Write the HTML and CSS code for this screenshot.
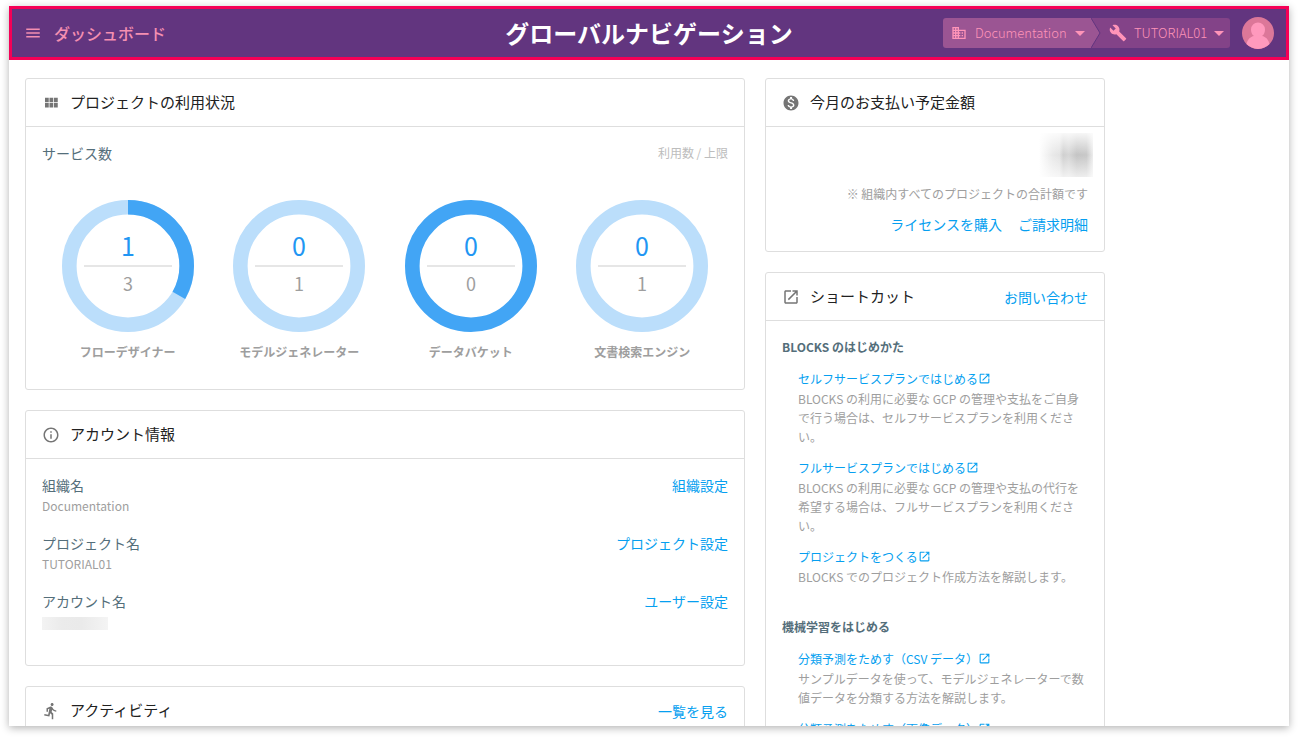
FILE: index.html
```html
<!DOCTYPE html>
<html lang="ja">
<head>
<meta charset="utf-8">
<meta name="viewport" content="width=device-width, initial-scale=1">
<title>ダッシュボード</title>
<link rel="stylesheet" href="styles.css">
</head>
<body>
<svg class="sprite" aria-hidden="true">
  <symbol id="menu" viewBox="0 0 24 24"><path d="M3 18h18v-2H3v2zm0-5h18v-2H3v2zm0-7v2h18V6H3z"/></symbol>
  <symbol id="business" viewBox="0 0 24 24"><path d="M12 7V3H2v18h20V7H12zM6 19H4v-2h2v2zm0-4H4v-2h2v2zm0-4H4V9h2v2zm0-4H4V5h2v2zm4 12H8v-2h2v2zm0-4H8v-2h2v2zm0-4H8V9h2v2zm0-4H8V5h2v2zm10 12h-8v-2h2v-2h-2v-2h2v-2h-2V9h8v10zm-2-8h-2v2h2v-2zm0 4h-2v2h2v-2z"/></symbol>
  <symbol id="build" viewBox="0 0 24 24"><path d="M22.7 19l-9.100-9.100c.9-2.300.4-5-1.500-6.900-2-2-5-2.400-7.400-1.300L9 6 6 9 1.600 4.700C.4 7.100.9 10.100 2.900 12.100c1.900 1.900 4.600 2.400 6.900 1.500l9.100 9.100c.4.4 1 .4 1.400 0l2.300-2.300c.5-.4.5-1.100.1-1.400z"/></symbol>
  <symbol id="caret" viewBox="0 0 10 5"><path d="M0 0l5 5 5-5z"/></symbol>
  <symbol id="module" viewBox="0 0 24 24"><path d="M4 11h5V5H4v6zm0 7h5v-6H4v6zm6 0h5v-6h-5v6zm6 0h5v-6h-5v6zm-6-7h5V5h-5v6zm6-6v6h5V5h-5z"/></symbol>
  <symbol id="money" viewBox="0 0 24 24"><path d="M12 2C6.480 2 2 6.480 2 12s4.480 10 10 10 10-4.480 10-10S17.520 2 12 2zm1.410 16.090V20h-2.670v-1.930c-1.710-.36-3.160-1.460-3.270-3.400h1.960c.1 1.050.82 1.870 2.650 1.870 1.960 0 2.400-.98 2.400-1.590 0-.83-.44-1.610-2.670-2.140-2.480-.6-4.180-1.620-4.180-3.670 0-1.720 1.390-2.840 3.110-3.210V4h2.670v1.950c1.860.45 2.790 1.860 2.850 3.390H14.300c-.05-1.110-.64-1.870-2.220-1.870-1.500 0-2.400.68-2.400 1.640 0 .84.65 1.390 2.670 1.910s4.180 1.390 4.180 3.910c-.01 1.830-1.380 2.830-3.120 3.160z"/></symbol>
  <symbol id="open" viewBox="0 0 24 24"><path d="M19 19H5V5h7V3H5c-1.110 0-2 .9-2 2v14c0 1.100.89 2 2 2h14c1.100 0 2-.9 2-2v-7h-2v7zM14 3v2h3.590l-9.830 9.830 1.410 1.410L19 6.410V10h2V3h-7z"/></symbol>
  <symbol id="info" viewBox="0 0 24 24"><path d="M11 17h2v-6h-2v6zm1-15C6.480 2 2 6.480 2 12s4.480 10 10 10 10-4.480 10-10S17.520 2 12 2zm0 18c-4.410 0-8-3.590-8-8s3.590-8 8-8 8 3.590 8 8-3.590 8-8 8zM11 9h2V7h-2v2z"/></symbol>
  <symbol id="run" viewBox="0 0 24 24"><path d="M13.490 5.480c1.100 0 2-.9 2-2s-.9-2-2-2-2 .9-2 2 .9 2 2 2zm-3.600 13.900l1-4.400 2.100 2v6h2v-7.500l-2.100-2 .6-3c1.300 1.500 3.300 2.500 5.500 2.500v-2c-1.900 0-3.500-1-4.300-2.400l-1-1.600c-.4-.6-1-1-1.700-1-.3 0-.5.1-.8.1l-5.200 2.200v4.700h2v-3.400l1.800-.7-1.600 8.100-4.900-1-.4 2 7 1.400z"/></symbol>
</svg>

<div class="app">
  <header class="navbar">
    <div class="nav-start">
      <button class="menu-button" type="button" aria-label="メニュー"><svg class="icon"><use href="#menu"/></svg></button>
      <span class="page-name">ダッシュボード</span>
    </div>
    <h1 class="nav-title">グローバルナビゲーション</h1>
    <div class="nav-end">
      <div class="switcher">
        <button class="switch org" type="button"><svg class="icon icon-small"><use href="#business"/></svg><span>Documentation</span><svg class="caret"><use href="#caret"/></svg></button>
        <button class="switch project" type="button"><svg class="icon"><use href="#build"/></svg><span>TUTORIAL01</span><svg class="caret"><use href="#caret"/></svg></button>
        <svg class="divider" viewBox="0 0 10 30" aria-hidden="true"><path class="divider-fill" d="M0 0l9 15-9 15z"/><path class="divider-line" d="M0 0l9 15-9 15"/></svg>
      </div>
      <button class="avatar" type="button" aria-label="ユーザー"><svg viewBox="0 0 32 32"><circle class="avatar-back" cx="16" cy="16" r="16"/><path class="avatar-person" d="M16 5.500a7 7 0 0 1 7 7c0 3-1.200 5.300-3 6.500 3.800.7 6.500 3.500 7.500 8A16 16 0 0 1 4.500 27c1-4.500 3.700-7.300 7.500-8-1.800-1.200-3-3.500-3-6.500a7 7 0 0 1 7-7z"/></svg></button>
    </div>
  </header>

  <main class="content">
    <div class="column">
      <section class="card">
        <div class="card-head"><svg class="icon"><use href="#module"/></svg><h2>プロジェクトの利用状況</h2></div>
        <div class="card-body usage">
          <div class="row"><h3 class="label">サービス数</h3><span class="legend">利用数 / 上限</span></div>
          <ul class="meters">
            <li class="meter">
              <svg class="donut" viewBox="0 0 132 132"><circle class="track" cx="66" cy="66" r="58.700"/><circle class="value" cx="66" cy="66" r="58.700" pathLength="3" stroke-dasharray="1 2" transform="rotate(-90 66 66)"/><path class="rule" d="M22 66h88"/><text class="used" x="66" y="56">1</text><text class="limit" x="66" y="91">3</text></svg>
              <span>フローデザイナー</span>
            </li>
            <li class="meter">
              <svg class="donut" viewBox="0 0 132 132"><circle class="track" cx="66" cy="66" r="58.700"/><path class="rule" d="M22 66h88"/><text class="used" x="66" y="56">0</text><text class="limit" x="66" y="91">1</text></svg>
              <span>モデルジェネレーター</span>
            </li>
            <li class="meter">
              <svg class="donut" viewBox="0 0 132 132"><circle class="value" cx="66" cy="66" r="58.700"/><path class="rule" d="M22 66h88"/><text class="used" x="66" y="56">0</text><text class="limit" x="66" y="91">0</text></svg>
              <span>データバケット</span>
            </li>
            <li class="meter">
              <svg class="donut" viewBox="0 0 132 132"><circle class="track" cx="66" cy="66" r="58.700"/><path class="rule" d="M22 66h88"/><text class="used" x="66" y="56">0</text><text class="limit" x="66" y="91">1</text></svg>
              <span>文書検索エンジン</span>
            </li>
          </ul>
        </div>
      </section>

      <section class="card">
        <div class="card-head"><svg class="icon"><use href="#info"/></svg><h2>アカウント情報</h2></div>
        <div class="card-body account">
          <div class="row"><div><h3 class="label">組織名</h3><p class="setting">Documentation</p></div><a class="link" href="#">組織設定</a></div>
          <div class="row"><div><h3 class="label">プロジェクト名</h3><p class="setting">TUTORIAL01</p></div><a class="link" href="#">プロジェクト設定</a></div>
          <div class="row"><div><h3 class="label">アカウント名</h3><div class="masked-name"></div></div><a class="link" href="#">ユーザー設定</a></div>
        </div>
      </section>

      <section class="card">
        <div class="card-head"><svg class="icon"><use href="#run"/></svg><h2>アクティビティ</h2><a class="link" href="#">一覧を見る</a></div>
        <div class="card-body"></div>
      </section>
    </div>

    <div class="column">
      <section class="card">
        <div class="card-head"><svg class="icon"><use href="#money"/></svg><h2>今月のお支払い予定金額</h2></div>
        <div class="card-body payment">
          <div class="masked-amount"></div>
          <p class="note">※ 組織内すべてのプロジェクトの合計額です</p>
          <div class="links"><a class="link" href="#">ライセンスを購入</a><a class="link" href="#">ご請求明細</a></div>
        </div>
      </section>

      <section class="card">
        <div class="card-head"><svg class="icon"><use href="#open"/></svg><h2>ショートカット</h2><a class="link" href="#">お問い合わせ</a></div>
        <div class="card-body">
          <h3 class="group">BLOCKS のはじめかた</h3>
          <ul class="guides">
            <li><a href="#">セルフサービスプランではじめる<svg class="external"><use href="#open"/></svg></a><p>BLOCKS の利用に必要な GCP の管理や支払をご自身で行う場合は、セルフサービスプランを利用ください。</p></li>
            <li><a href="#">フルサービスプランではじめる<svg class="external"><use href="#open"/></svg></a><p>BLOCKS の利用に必要な GCP の管理や支払の代行を希望する場合は、フルサービスプランを利用ください。</p></li>
            <li><a href="#">プロジェクトをつくる<svg class="external"><use href="#open"/></svg></a><p>BLOCKS でのプロジェクト作成方法を解説します。</p></li>
          </ul>
          <h3 class="group">機械学習をはじめる</h3>
          <ul class="guides">
            <li><a href="#">分類予測をためす（CSV データ）<svg class="external"><use href="#open"/></svg></a><p>サンプルデータを使って、モデルジェネレーターで数値データを分類する方法を解説します。</p></li>
            <li><a href="#">分類予測をためす（画像データ）<svg class="external"><use href="#open"/></svg></a></li>
          </ul>
        </div>
      </section>
    </div>
  </main>
</div>
</body>
</html>
```
FILE: styles.css
```css
* { box-sizing: border-box; margin: 0; padding: 0; }

body {
  height: 100vh;
  padding: 6px 9px 12px;
  overflow: hidden;
  background: #fff;
  color: #212121;
  font: 14px/20px "Noto Sans CJK JP", "Noto Sans", sans-serif;
}

a { color: #069ff0; text-decoration: none; }
ul { list-style: none; }
button { border: 0; background: none; font: inherit; color: inherit; cursor: pointer; }

.sprite { position: absolute; width: 0; height: 0; }
.icon { flex: none; width: 18px; height: 18px; fill: currentColor; }
.icon-small { width: 16px; height: 16px; }
.caret { flex: none; width: 10px; height: 5px; fill: currentColor; }

.app {
  height: 100%;
  overflow: hidden;
  background: #fff;
  box-shadow: 0 2px 8px rgba(0, 0, 0, 0.3);
}

/* Navigation bar */
.navbar {
  display: grid;
  grid-template-columns: 1fr auto 1fr;
  align-items: center;
  height: 54px;
  padding: 0 12px;
  border: 3px solid #f50057;
  background: #62357f;
  color: #ff94b8;
}
.nav-start { display: flex; align-items: center; gap: 12px; color: #f48fb1; }
.menu-button { display: flex; }
.page-name { font-size: 16px; font-weight: 500; }
.nav-title { color: #fff; font-size: 24px; line-height: 36px; font-weight: 700; }
.nav-end { display: flex; justify-content: flex-end; align-items: center; gap: 12px; }

.switcher { position: relative; display: grid; grid-template-columns: 148px 139px; }
.switch { display: flex; align-items: center; height: 30px; }
.switch span { flex: 1; text-align: left; font-size: 13px; font-weight: 300; }
.org { gap: 8px; padding: 0 8px; border-radius: 3px 0 0 3px; background: #9b5593; }
.org { padding-right: 18px; }
.project { gap: 7px; padding: 0 6px 0 18px; border-radius: 0 3px 3px 0; background: #834388; }
.divider { position: absolute; left: 148px; top: 0; width: 10px; height: 30px; }
.divider-fill { fill: #9b5593; }
.divider-line { fill: none; stroke: #62357f; }
.avatar { width: 32px; height: 32px; }
.avatar svg { display: block; }
.avatar-back { fill: #dc7799; }
.avatar-person { fill: #ff99bd; }

/* Cards */
.content {
  display: grid;
  grid-template-columns: minmax(0, 720px) minmax(0, 340px);
  gap: 20px;
  padding: 18px 16px;
}
.column { display: flex; flex-direction: column; gap: 20px; }
.card { border: 1px solid #dedede; border-radius: 3px; background: #fff; }
.card-head {
  display: flex;
  align-items: center;
  gap: 10px;
  height: 48px;
  padding: 0 16px;
  border-bottom: 1px solid #dedede;
}
.card-head .icon { color: #757575; }
.card-head h2 { flex: 1; padding-bottom: 2px; font-size: 15px; font-weight: 400; }
.card-body { padding: 16px; }
.row { display: flex; justify-content: space-between; align-items: flex-start; }
.label { color: #546e7a; font-size: 14px; font-weight: 400; }
.legend { color: #bdbdbd; font-size: 12px; }

.usage { padding-bottom: 27px; }
.meters { display: grid; grid-template-columns: repeat(4, 1fr); padding-top: 37px; }
.meter {
  display: flex;
  flex-direction: column;
  align-items: center;
  gap: 10px;
  color: #9e9e9e;
  font-size: 12px;
  font-weight: 700;
}
.donut { display: block; width: 132px; height: 132px; }
.track, .value { fill: none; stroke: #bbdefb; stroke-width: 14.6; }
.value { stroke: #42a5f5; }
.rule { stroke: #e6e6e6; stroke-width: 2; }
.used, .limit { text-anchor: middle; font-weight: 400; fill: #2196f3; font-size: 25px; }
.limit { fill: #9e9e9e; font-size: 18px; }

.account { display: grid; gap: 16px; padding-bottom: 32px; }
.setting { height: 22px; color: #9e9e9e; font-size: 12px; line-height: 22px; }
.masked-name {
  width: 66px;
  height: 13px;
  margin: 6px 0 3px;
  background: linear-gradient(90deg, #f3f3f3, #ebebeb 30%, #eaeaea 60%, #f4f4f4);
}

.payment { display: flex; flex-direction: column; align-items: flex-end; padding-top: 6px; padding-bottom: 17px; }
.masked-amount {
  width: 54px;
  height: 44px;
  margin-right: -5px;
  background:
    linear-gradient(rgba(255, 255, 255, 0.85), rgba(255, 255, 255, 0) 50%, rgba(255, 255, 255, 0.7)),
    linear-gradient(90deg, #fff, #e9e9e9 25%, #e3e3e3 38%, #cfcfcf 45%, #d6d6d6 55%, #c4c4c4 70%, #c8c8c8 88%, #ededed);
}
.note { margin-top: 7px; color: #9e9e9e; font-size: 12px; }
.links { display: flex; gap: 16px; margin-top: 10px; }

.group { margin-bottom: 12px; color: #546e7a; font-size: 12px; font-weight: 700; }
.guides { display: grid; gap: 12px; padding: 0 0 31px 16px; font-size: 12px; }
.guides a { display: block; height: 20px; }
.guides p { color: #9e9e9e; line-height: 19px; }
.external { width: 13px; height: 13px; fill: currentColor; vertical-align: -1px; }
```
